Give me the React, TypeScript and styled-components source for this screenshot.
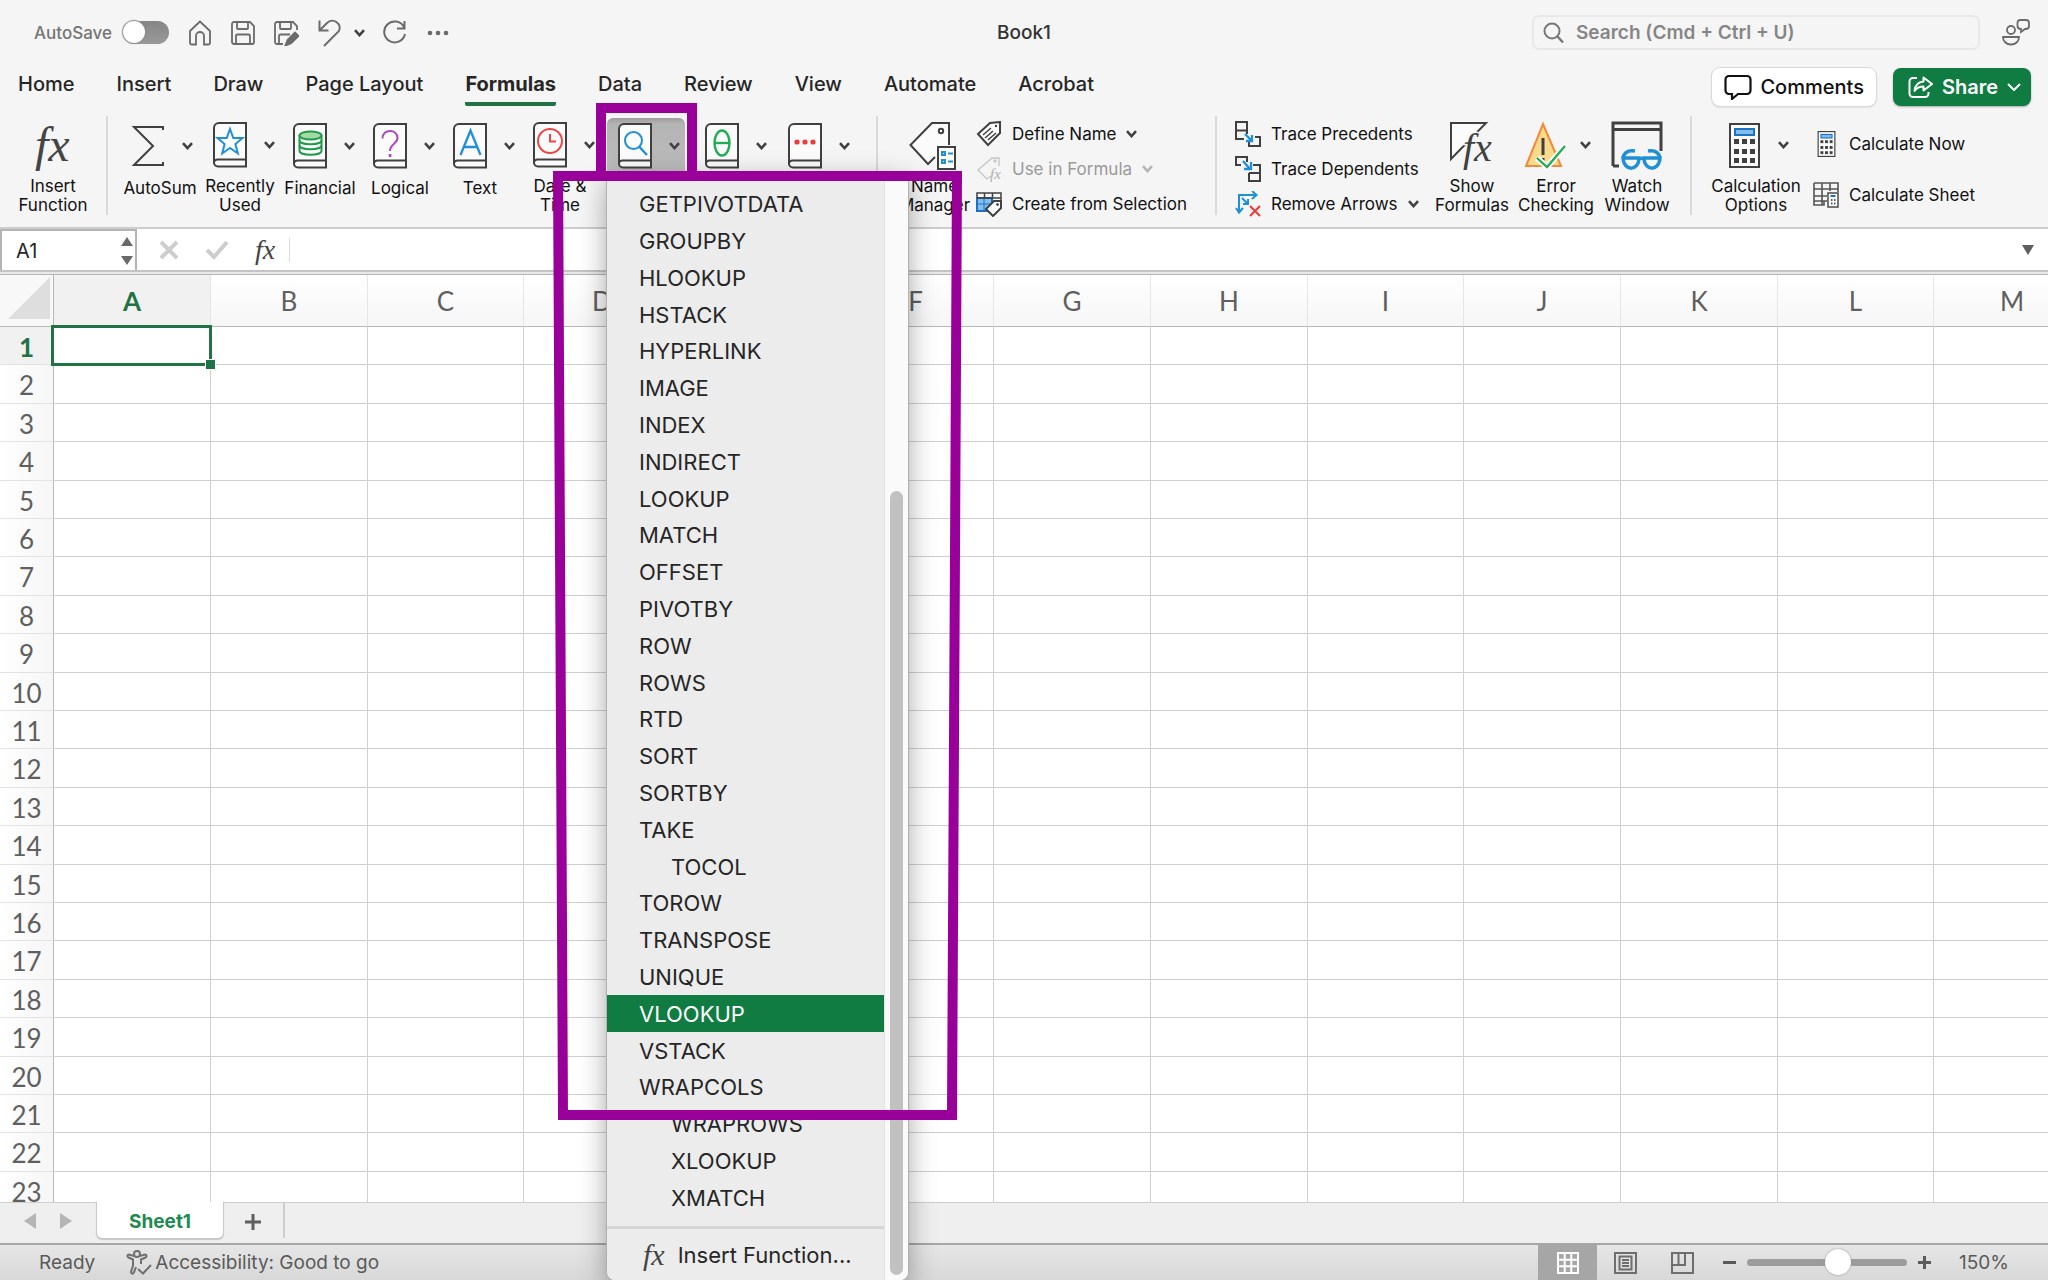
import React from 'react';
import styled, { createGlobalStyle, css } from 'styled-components';

const GlobalStyle = createGlobalStyle`
  *, *::before, *::after { box-sizing: border-box; }
  body { margin: 0; font-family: Inter, "Liberation Sans", sans-serif; color: #262626; background: #f5f5f5; }
  button, input { font: inherit; color: inherit; }
  button { border: 0; padding: 0; margin: 0; background: none; white-space: nowrap; }
`;

const GREEN = '#107c41';
const INK = '#404040';
const BLUE = '#1f8fd6';

/* ---------- shell ---------- */

const Window = styled.div`
  display: flex;
  flex-direction: column;
  height: 100vh;
  min-height: 640px;
  overflow: hidden;
  background: #f5f5f5;
`;

const TitleBar = styled.header`
  display: grid;
  grid-template-columns: 1fr auto 1fr;
  align-items: center;
  height: 65px;
  padding: 0 18px;
  flex: none;
`;

const QuickAccess = styled.div`
  display: flex;
  align-items: center;
  padding-left: 16px;
  color: #6b6b6b;
`;

const AutoSave = styled.label`
  display: flex;
  align-items: center;
  gap: 11px;
  margin-right: 19px;
  font-size: 17px;
  font-weight: 500;
  color: #757575;
`;

const Toggle = styled.input`
  appearance: none;
  width: 46px;
  height: 23px;
  margin: 0;
  border-radius: 12px;
  background: linear-gradient(#858585, #9a9a9a);
  &::before {
    content: '';
    display: block;
    width: 22px;
    height: 22px;
    border-radius: 50%;
    background: #fff;
    box-shadow: 0 0 1px 1px #8a8a8a;
  }
`;

const QuickButton = styled.button<{ $gap?: number }>`
  display: flex;
  margin-right: ${(p) => p.$gap ?? 19}px;
`;

const DocTitle = styled.h1`
  margin: 0;
  font-size: 19px;
  font-weight: 500;
  color: #333;
`;

const TitleRight = styled.div`
  display: flex;
  align-items: center;
  justify-content: flex-end;
  gap: 22px;
`;

const SearchBox = styled.label`
  display: flex;
  align-items: center;
  gap: 12px;
  width: 448px;
  height: 35px;
  padding-left: 9px;
  border: 2px solid #e8e8e8;
  border-radius: 7px;
  color: #7a7a7a;
`;

const SearchInput = styled.input`
  flex: 1;
  border: 0;
  outline: 0;
  padding: 0;
  background: transparent;
  font-size: 19px;
  font-weight: 600;
  &::placeholder { color: #868686; opacity: 1; }
`;

const TabBar = styled.nav`
  display: flex;
  justify-content: space-between;
  align-items: flex-end;
  height: 41px;
  padding: 0 17px 0 18px;
  flex: none;
`;

const Tabs = styled.div`
  display: flex;
  gap: 42px;
  height: 41px;
`;

const Tab = styled.button<{ $active?: boolean }>`
  height: 41px;
  font-size: 20px;
  font-weight: ${(p) => (p.$active ? 700 : 500)};
  border-bottom: 4px solid ${(p) => (p.$active ? '#217346' : 'transparent')};
  border-radius: 2px;
`;

const Actions = styled.div`
  display: flex;
  gap: 17px;
`;

const ActionButton = styled.button<{ $primary?: boolean }>`
  display: flex;
  align-items: center;
  gap: 8px;
  height: 38px;
  padding: 0 12px;
  border-radius: 8px;
  font-size: 20px;
  font-weight: 500;
  color: #111;
  background: #fff;
  box-shadow: 0 0 0 1px #d8d8d8, 0 1px 2px #bbb;
  ${(p) => p.$primary && css`
    gap: 9px;
    padding: 0 10px 0 15px;
    color: #fff;
    font-weight: 600;
    background: ${GREEN};
    box-shadow: 0 1px 2px #aaa;
  `}
`;

/* ---------- ribbon ---------- */

const RibbonBar = styled.section`
  display: flex;
  flex: none;
  position: relative;
  z-index: 2;
  padding: 10px 0 12px;
  border-bottom: 2px solid #cdcdcd;
  color: #111;
`;

const Group = styled.div<{ $pad?: number; $end?: number }>`
  display: flex;
  flex: none;
  height: 99px;
  padding-left: ${(p) => p.$pad ?? 0}px;
  padding-right: ${(p) => p.$end ?? 0}px;
  & + & { border-left: 2px solid #d9d9d9; }
`;

const BigButton = styled.button<{ $w: number }>`
  display: flex;
  flex-direction: column;
  width: ${(p) => p.$w}px;
  height: 97px;
  margin-top: 2px;
`;

const IconRow = styled.span<{ $inset: number; $gap?: number; $held?: boolean }>`
  display: flex;
  align-items: center;
  align-self: stretch;
  gap: ${(p) => p.$gap ?? 17}px;
  height: 56px;
  padding-left: ${(p) => p.$inset}px;
  ${(p) => p.$held && css`
    border-radius: 6px 6px 0 0;
    background: linear-gradient(#9d9d9d, #b4b4b4 6px, #bcbcbc);
  `}
`;

const BigLabel = styled.span`
  align-self: stretch;
  margin: 5px -20px 0;
  font-size: 17px;
  line-height: 19px;
  text-align: center;
  white-space: pre;
`;

const SmallStack = styled.div<{ $w: number; $before?: number; $top?: number; $gap?: number }>`
  display: flex;
  flex-direction: column;
  width: ${(p) => p.$w}px;
  margin-left: ${(p) => p.$before ?? 0}px;
  padding-top: ${(p) => p.$top ?? 8}px;
  gap: ${(p) => p.$gap ?? 15}px;
`;

const SmallButton = styled.button`
  display: flex;
  align-items: center;
  gap: 10px;
  height: 20px;
  font-size: 17px;
  line-height: 20px;
  &:disabled { color: #9a9a9a; }
`;

const IconBox = styled.span`
  display: flex;
  justify-content: center;
  width: 26px;
`;

const Anchor = styled.div`
  position: relative;
  margin: 0 7px;
`;

/* ---------- function menu ---------- */

const Menu = styled.div`
  position: absolute;
  top: 57px;
  left: 0;
  display: flex;
  width: 301px;
  border-radius: 0 0 8px 8px;
  overflow: hidden;
  background: #ececec;
  font-size: 22px;
  color: #262626;
`;

const MenuShadow = styled.div`
  position: absolute;
  top: 57px;
  left: 0;
  width: 301px;
  height: 1107px;
  border-radius: 8px;
  box-shadow: 0 0 1px 1px #b0b0b0, 0 8px 28px rgba(0, 0, 0, 0.36);
`;

const MenuBody = styled.div`
  flex: 1;
  padding-top: 12px;
`;

const MenuList = styled.ul`
  margin: 0;
  padding: 0 0 10px;
  list-style: none;
  border-bottom: 3px solid #d6d6d6;
`;

const MenuRow = styled.li`
  display: flex;
  height: 37px;
  &:nth-child(5n) { height: 36px; }
`;

const MenuItem = styled.button<{ $indent?: boolean; $active?: boolean }>`
  flex: 1;
  text-align: left;
  padding-left: ${(p) => (p.$indent ? 64 : 32)}px;
  ${(p) => p.$active && css`color: #fff; background: ${GREEN};`}
`;

const MenuFooter = styled.button`
  display: flex;
  align-items: center;
  gap: 13px;
  height: 51px;
  padding-left: 36px;
`;

const ScrollTrack = styled.div`
  width: 24px;
  padding: 318px 5px 5px;
  background: #fafafa;
  border-left: 1px solid #e3e3e3;
`;

const ScrollThumb = styled.div`
  height: 100%;
  border-radius: 7px;
  background: #c1c1c1;
`;

const Callout = styled.svg`
  position: absolute;
  left: -60px;
  top: -20px;
  pointer-events: none;
`;

/* ---------- formula bar ---------- */

const FormulaBar = styled.div`
  display: flex;
  align-items: center;
  flex: none;
  height: 46px;
  padding-bottom: 4px;
  background: #fff;
  border-bottom: 1px solid #b5b5b5;
  box-shadow: inset 0 -2px #e8e8e8, inset 0 -4px #c4c4c4;
`;

const NameBox = styled.div`
  display: flex;
  align-items: center;
  width: 137px;
  height: 41px;
  margin-right: 8px;
  padding: 0 2px 0 14px;
  border: 2px solid #b4b4b4;
  border-bottom: 0;
`;

const CellRef = styled.input`
  flex: 1;
  min-width: 0;
  border: 0;
  outline: 0;
  padding: 0;
  font-size: 20px;
`;

const FormulaButton = styled.button<{ $w?: number }>`
  display: flex;
  justify-content: center;
  width: ${(p) => p.$w ?? 48}px;
`;

const FormulaInput = styled.input`
  flex: 1;
  height: 24px;
  border: 0;
  border-left: 1px solid #dcdcdc;
  outline: 0;
  padding: 0 12px;
`;

const Fx = styled.span<{ $size: number }>`
  font-family: "Liberation Serif", serif;
  font-style: italic;
  font-size: ${(p) => p.$size}px;
  line-height: 1;
  color: #444;
`;

/* ---------- grid ---------- */

const SheetArea = styled.main`
  flex: 1;
  min-height: 0;
  overflow: hidden;
  background: #fff;
`;

const Grid = styled.table`
  table-layout: fixed;
  width: 2091px;
  border-collapse: separate;
  border-spacing: 0;
  font-family: Lato, "Liberation Sans", sans-serif;
  font-size: 26px;
  color: #5f5f5f;
`;

const HeadCol = styled.col`
  width: 54px;
`;

const CellCol = styled.col`
  width: 157px;
  &:nth-child(3n + 1) { width: 156px; }
`;

const ColHead = styled.th<{ $active?: boolean }>`
  height: 52px;
  padding: 0;
  font-weight: ${(p) => (p.$active ? 700 : 400)};
  color: ${(p) => (p.$active ? '#217346' : 'inherit')};
  background: ${(p) => (p.$active ? '#f1f1f1' : 'linear-gradient(#fff, #f6f6f6)')};
  border-right: 1px solid #e6e6e6;
  border-bottom: 1px solid #b9b9b9;
`;

const Corner = styled.td`
  padding: 0 0 0 8px;
  vertical-align: middle;
  background: #f8f8f8;
  border-right: 1px solid #b9b9b9;
  border-bottom: 1px solid #b9b9b9;
`;

const Row = styled.tr`
  height: 38px;
  &:nth-child(5n + 2), &:nth-child(5n + 4) { height: 39px; }
`;

const RowHead = styled.th<{ $active?: boolean }>`
  padding: 2px 0 0;
  line-height: 30px;
  font-weight: ${(p) => (p.$active ? 700 : 400)};
  color: ${(p) => (p.$active ? '#217346' : 'inherit')};
  background: ${(p) => (p.$active ? '#f1f1f1' : 'linear-gradient(90deg, #fff, #f6f6f6)')};
  border-right: 1px solid #b9b9b9;
  border-bottom: 1px solid #e3e3e3;
`;

const Cell = styled.td<{ $active?: boolean }>`
  padding: 0;
  border-right: 1px solid #cfcfcf;
  border-bottom: 1px solid #cfcfcf;
  ${(p) => p.$active && css`
    position: relative;
    &::before {
      content: '';
      position: absolute;
      inset: -2px -2px -2px -3px;
      border: 3px solid #217346;
    }
    &::after {
      content: '';
      position: absolute;
      right: -5px;
      bottom: -5px;
      width: 9px;
      height: 9px;
      background: #217346;
      box-shadow: 0 0 0 1px #fff;
    }
  `}
`;

/* ---------- bottom bars ---------- */

const SheetBar = styled.div`
  display: flex;
  flex: none;
  height: 41px;
  padding-left: 24px;
  background: #efefef;
  box-shadow: inset 0 1px #cfcfcf;
`;

const SheetNav = styled.div`
  display: flex;
  align-items: center;
  gap: 24px;
  width: 73px;
  height: 42px;
`;

const SheetTab = styled.button`
  width: 126px;
  height: 36px;
  padding-top: 3px;
  border-radius: 0 0 5px 5px;
  background: #fff;
  box-shadow: 0 1px 1px 1px #c6c6c6;
  clip-path: inset(0 -3px -4px -3px);
  font-size: 19px;
  font-weight: 700;
  color: #1f8a50;
`;

const AddSheet = styled.button`
  display: flex;
  align-items: center;
  justify-content: center;
  width: 62px;
  height: 36px;
  padding-top: 3px;
  border-right: 2px solid #cdcdcd;
`;

const StatusBar = styled.footer`
  display: flex;
  flex: none;
  align-items: center;
  justify-content: space-between;
  height: 37px;
  padding-left: 39px;
  border-top: 2px solid #a6a6a6;
  background: linear-gradient(#e6e6e6, #d8d8d8);
  font-size: 19px;
  color: #5a5a5a;
`;

const StatusLeft = styled.div`
  display: flex;
  align-items: center;
  gap: 31px;
`;

const Accessibility = styled.button`
  display: flex;
  align-items: center;
  gap: 3px;
`;

const StatusRight = styled.div`
  display: flex;
  align-items: center;
  align-self: stretch;
`;

const ViewButton = styled.button<{ $active?: boolean }>`
  display: flex;
  align-items: center;
  justify-content: center;
  align-self: stretch;
  width: ${(p) => (p.$active ? 59 : 57)}px;
  color: ${(p) => (p.$active ? '#fff' : '#6e6e6e')};
  background: ${(p) => (p.$active ? '#a6a6a6' : 'transparent')};
`;

const ZoomControl = styled.div`
  display: flex;
  align-items: center;
  gap: 11px;
  margin-left: 12px;
`;

const ZoomRange = styled.input`
  appearance: none;
  width: 160px;
  height: 26px;
  margin: 0;
  background: transparent;
  &::-webkit-slider-runnable-track {
    height: 7px;
    border-radius: 4px;
    background: #9c9c9c;
  }
  &::-webkit-slider-thumb {
    appearance: none;
    width: 26px;
    height: 26px;
    margin-top: -10px;
    border-radius: 50%;
    background: #fff;
    box-shadow: 0 0 2px #888;
  }
`;

const ZoomValue = styled.span`
  width: 89px;
  margin-left: 28px;
`;

/* ---------- drawings ---------- */

type IconProps = { w: number; h: number; children: React.ReactNode; stroke?: string; sw?: number };

const Icon = ({ w, h, children, stroke = 'currentColor', sw = 2 }: IconProps) => (
  <svg width={w} height={h} viewBox={`0 0 ${w} ${h}`} fill="none" stroke={stroke} strokeWidth={sw} aria-hidden="true">
    {children}
  </svg>
);

const Chevron = ({ color = '#404040', thin = false }: { color?: string; thin?: boolean }) => (
  <Icon w={thin ? 14 : 11} h={8} stroke={color} sw={thin ? 2 : 2.5}>
    <path d={thin ? 'M1 1l6 6 6-6' : 'M1 1.2l4.5 5L10 1.2'} />
  </Icon>
);

const Book = ({ children }: { children: React.ReactNode }) => (
  <Icon w={34} h={46} stroke={INK}>
    <path d="M33 1H6a5 5 0 0 0-5 5v34.5A4 4 0 0 0 5 44.5H33z" fill="#fbfbfb" />
    <path d="M33 37.5H5a3.5 3.5 0 0 0-4 3.5" />
    {children}
  </Icon>
);

const glyphs = {
  star: <path d="M17 7l3.3 9h9.2l-7.1 6 2.4 9.500L17 26l-7.800 5.500 2.400-9.500-7.100-6h9.200z" stroke={BLUE} />,
  coins: (
    <g stroke="#1f9a48" fill="#fbfbfb">
      <path d="M6.5 12v16c0 5 22 5 22 0V12" />
      <path d="M6.5 17.500c0 5 22 5 22 0M6.5 22.500c0 5 22 5 22 0" fill="none" />
      <ellipse cx="17.5" cy="12.5" rx="11" ry="4" fill="#a3d9a5" />
    </g>
  ),
  question: (
    <g stroke="#b146c2">
      <path d="M9.5 15.500c0-10 15-10 15-.5 0 6-7.500 5.500-7.500 13" />
      <path d="M15.8 32.500h2.600" strokeWidth="3" />
    </g>
  ),
  letter: <path d="M7.500 32L17.500 7.500 27.500 32M11 24h13" stroke={BLUE} strokeWidth="2.3" />,
  clock: (
    <g stroke="#f04545">
      <circle cx="17" cy="19" r="12" />
      <path d="M17 12v7.500h6" />
    </g>
  ),
  lens: (
    <g stroke={BLUE}>
      <circle cx="15.5" cy="17.5" r="8.5" />
      <path d="M21.500 24l7.500 8" strokeWidth="2.3" />
    </g>
  ),
  theta: (
    <g stroke="#22ad55" strokeWidth="2.4">
      <ellipse cx="17" cy="20" rx="7.500" ry="12.500" />
      <path d="M9.500 20h15" />
    </g>
  ),
  dots: (
    <g fill="#ee3a35" stroke="none">
      <circle cx="9" cy="19" r="2.6" />
      <circle cx="17" cy="19" r="2.6" />
      <circle cx="25" cy="19" r="2.6" />
    </g>
  ),
};

type BookButtonProps = { glyph: keyof typeof glyphs; label?: string; name?: string; w?: number };

const BookButton = ({ glyph, label, name, w = 80 }: BookButtonProps) => (
  <BigButton $w={w} aria-label={name}>
    <IconRow $inset={13}>
      <Book>{glyphs[glyph]}</Book>
      <Chevron />
    </IconRow>
    {label && <BigLabel>{label}</BigLabel>}
  </BigButton>
);

const Calculator = ({ w, h }: { w: number; h: number }) => (
  <svg width={w} height={h} viewBox="0 0 31 45" fill="none" stroke={INK} strokeWidth="2" aria-hidden="true">
    <rect x="1" y="1" width="29" height="43" fill="#fbfbfb" />
    <rect x="6" y="6" width="19" height="6" fill="#83bdec" stroke="#1c72c0" />
    {[16, 26, 35].map((y) => [5, 13, 21].map((x) => <rect key={`${x}-${y}`} x={x} y={y} width="5" height="5" fill={INK} stroke="none" />))}
  </svg>
);

const FUNCTIONS = [
  'GETPIVOTDATA', 'GROUPBY', 'HLOOKUP', 'HSTACK', 'HYPERLINK', 'IMAGE', 'INDEX', 'INDIRECT', 'LOOKUP', 'MATCH',
  'OFFSET', 'PIVOTBY', 'ROW', 'ROWS', 'RTD', 'SORT', 'SORTBY', 'TAKE', 'TOCOL', 'TOROW', 'TRANSPOSE', 'UNIQUE',
  'VLOOKUP', 'VSTACK', 'WRAPCOLS', 'WRAPROWS', 'XLOOKUP', 'XMATCH',
];
const INDENTED = new Set(['TOCOL', 'WRAPROWS', 'XLOOKUP', 'XMATCH']);
const TABS = ['Home', 'Insert', 'Draw', 'Page Layout', 'Formulas', 'Data', 'Review', 'View', 'Automate', 'Acrobat'];
const COLUMNS = 'ABCDEFGHIJKLM'.split('');
const ROWS = Array.from({ length: 23 }, (_, i) => i + 1);

const LookupMenu = () => (
  <Anchor>
    <MenuShadow />
    <BigButton $w={78} aria-label="Lookup and reference" aria-expanded="true">
      <IconRow $inset={11} $held>
        <Book>{glyphs.lens}</Book>
        <Chevron />
      </IconRow>
    </BigButton>
    <Menu>
      <MenuBody>
        <MenuList>
          {FUNCTIONS.map((f) => (
            <MenuRow key={f}>
              <MenuItem $indent={INDENTED.has(f)} $active={f === 'VLOOKUP'}>{f}</MenuItem>
            </MenuRow>
          ))}
        </MenuList>
        <MenuFooter>
          <Fx $size={30}>fx</Fx>
          <span>Insert Function...</span>
        </MenuFooter>
      </MenuBody>
      <ScrollTrack><ScrollThumb /></ScrollTrack>
    </Menu>
    <Callout width="420" height="1040" viewBox="0 0 420 1040" fill="none" stroke="#990099" strokeWidth="10" aria-hidden="true">
      <path d="M54 80V12H145V80" />
      <path d="M11 80H410L405 1019H16L11 75" />
    </Callout>
  </Anchor>
);

const Ribbon = () => (
  <RibbonBar>
    <Group>
      <BigButton $w={106}>
        <IconRow $inset={35}><Fx $size={48}>fx</Fx></IconRow>
        <BigLabel>{'Insert\nFunction'}</BigLabel>
      </BigButton>
    </Group>
    <Group $pad={12} $end={19}>
      <BigButton $w={80}>
        <IconRow $inset={11}>
          <Icon w={34} h={42} stroke={INK} sw={2}>
            <path d="M32 5V2H3l19 19L3 40h29v-3" />
          </Icon>
          <Chevron />
        </IconRow>
        <BigLabel>AutoSum</BigLabel>
      </BigButton>
      <BookButton glyph="star" label={'Recently\nUsed'} />
      <BookButton glyph="coins" label="Financial" />
      <BookButton glyph="question" label="Logical" />
      <BookButton glyph="letter" label="Text" />
      <BookButton glyph="clock" label={'Date &\nTime'} />
      <LookupMenu />
      <BookButton glyph="theta" name="Math and trigonometry" w={83} />
      <BookButton glyph="dots" name="More functions" w={82} />
    </Group>
    <Group $pad={15}>
      <BigButton $w={83}>
        <IconRow $inset={16}>
          <Icon w={48} h={49} stroke={INK}>
            <path d="M40 24V2H23L1.500 24 19 43l7-7" fill="#fbfbfb" />
            <circle cx="32" cy="10" r="2.2" />
            <rect x="29" y="26" width="17" height="22" fill="#fff" />
            <path d="M33 31h3v3h-3zM33 39h3v3h-3zM39 32.500h5M39 40.500h5" stroke={BLUE} />
          </Icon>
        </IconRow>
        <BigLabel>{'Name\nManager'}</BigLabel>
      </BigButton>
      <SmallStack $w={239}>
        <SmallButton>
          <IconBox>
            <Icon w={26} h={26} stroke={INK} sw={2}>
              <path d="M2 13L14 2l10-1v11L12 24z" fill="#fff" />
              <path d="M7 14l8-7M9 17l8-7M12 19l8-7" strokeWidth="1.5" />
              <circle cx="20" cy="5" r="1.2" fill={INK} stroke="none" />
            </Icon>
          </IconBox>
          Define Name <Chevron />
        </SmallButton>
        <SmallButton disabled>
          <IconBox>
            <Icon w={26} h={26} stroke="#c4c4c4" sw={1.3}>
              <path d="M23 10V2h-7L2 14l9 9 4-3" />
              <circle cx="19" cy="5" r="1" />
              <text x="14" y="23" fontFamily="Liberation Serif" fontStyle="italic" fontSize="15" fill="#b0b0b0" stroke="none">fx</text>
            </Icon>
          </IconBox>
          Use in Formula <Chevron color="#b5b5b5" />
        </SmallButton>
        <SmallButton>
          <IconBox>
            <Icon w={26} h={26} stroke={INK} sw={1}>
              <path d="M1 7h15v13H1z" fill="#83bdec" stroke="#1c72c0" strokeWidth="2" />
              <path d="M1 13h14M8 7v13" stroke="#1c72c0" />
              <path d="M1 7V2h24v10M8.500 2v5M16.500 2v5M1 7h24" strokeWidth="1.5" />
              <path d="M10 18l8-8h7v7l-8 8z" fill="#fff" strokeWidth="2" />
              <circle cx="21.5" cy="13.5" r="1" fill={INK} />
            </Icon>
          </IconBox>
          Create from Selection
        </SmallButton>
      </SmallStack>
    </Group>
    <Group $pad={18} $end={18}>
      <SmallStack $w={199}>
        <SmallButton>
          <IconBox>
            <Icon w={26} h={26} stroke={INK}>
              <path d="M1 9.500h11M12 13V1H1v17h8M20 16h5v9H14v-4" />
              <path d="M10 13l7 7M17 14v6h-6" stroke={BLUE} strokeWidth="2.3" />
            </Icon>
          </IconBox>
          Trace Precedents
        </SmallButton>
        <SmallButton>
          <IconBox>
            <Icon w={26} h={26} stroke={INK}>
              <path d="M6 9H1V1h11v5M18 9h7v16H14v-8M14 17h11" />
              <path d="M8 5l7 8M16 6v7h-7" stroke={BLUE} strokeWidth="2.3" />
            </Icon>
          </IconBox>
          Trace Dependents
        </SmallButton>
        <SmallButton>
          <IconBox>
            <Icon w={26} h={26} stroke={BLUE}>
              <path d="M4 21V4h17M17 0l4.500 4L17 8M1 17l3 4.500L8 17M7 7l6 6M13 8v5H8" />
              <path d="M15 15l10 10M25 15L15 25" stroke="#ee3a35" />
            </Icon>
          </IconBox>
          Remove Arrows <Chevron />
        </SmallButton>
      </SmallStack>
      <BigButton $w={76}>
        <IconRow $inset={15}>
          <Icon w={46} h={49} stroke={INK}>
            <path d="M2 38V2h35L2 38z" fill="#fbfbfb" />
            <text x="14" y="40" fontFamily="Liberation Serif" fontStyle="italic" fontSize="40" fill={INK} stroke="#f5f5f5" strokeWidth="3" paintOrder="stroke">fx</text>
          </Icon>
        </IconRow>
        <BigLabel>{'Show\nFormulas'}</BigLabel>
      </BigButton>
      <BigButton $w={92}>
        <IconRow $inset={14} $gap={7}>
          <Icon w={49} h={49}>
            <path d="M19 3l18 42H2z" fill="#f9d98c" stroke="#f08a3c" />
            <path d="M19 17v17M19 37v4" stroke={INK} strokeWidth="3" />
            <path d="M13 37l10 9 18-21" stroke="#fff" strokeWidth="6" />
            <path d="M13 37l10 9 18-21" stroke="#22ad55" strokeWidth="2.3" />
          </Icon>
          <Chevron />
        </IconRow>
        <BigLabel>{'Error\nChecking'}</BigLabel>
      </BigButton>
      <BigButton $w={70}>
        <IconRow $inset={9}>
          <Icon w={52} h={49} stroke={INK} sw={3}>
            <path d="M2 45V2h48v28M2 8.500h48M2 45h6" fill="none" />
            <g stroke={BLUE} strokeWidth="3.5">
              <path d="M12 37h16c0 13-15 14-16 0zM33 37h16c-1 14-16 13-16 0zM27 39c2-2 5-2 7 0M12 37c1-5 5-8 12-7M49 37c-1-5-5-8-12-7" />
            </g>
          </Icon>
        </IconRow>
        <BigLabel>{'Watch\nWindow'}</BigLabel>
      </BigButton>
    </Group>
    <Group $pad={18}>
      <BigButton $w={92}>
        <IconRow $inset={19} $gap={18}>
          <Calculator w={31} h={45} />
          <Chevron />
        </IconRow>
        <BigLabel>{'Calculation\nOptions'}</BigLabel>
      </BigButton>
      <SmallStack $w={170} $before={11} $top={18} $gap={31}>
        <SmallButton>
          <IconBox><Calculator w={19} h={26} /></IconBox>
          Calculate Now
        </SmallButton>
        <SmallButton>
          <IconBox>
            <Icon w={26} h={26} stroke="#555" sw={1}>
              <path d="M1 1h24v9M1 1v22h10v-4M1 7h24M1 14h13M1 19h13M9 1v22M17 1v8" strokeWidth="1.6" />
              <rect x="15" y="11" width="10" height="14" fill="#fff" strokeWidth="1.6" />
              <path d="M17.500 14h5" stroke="#1c72c0" strokeWidth="2" />
              <path d="M18 18h1.500M21 18h1.500M18 21.500h1.500M21 21.500h1.500" strokeWidth="2" />
            </Icon>
          </IconBox>
          Calculate Sheet
        </SmallButton>
      </SmallStack>
    </Group>
  </RibbonBar>
);

export default function App() {
  return (
    <Window>
      <GlobalStyle />
      <TitleBar>
        <QuickAccess>
          <AutoSave>AutoSave<Toggle type="checkbox" role="switch" /></AutoSave>
          <QuickButton aria-label="Home">
            <Icon w={24} h={26}><path d="M12 1.500L2 11v12a1.500 1.500 0 0 0 1.500 1.500H8V16a4 4 0 0 1 8 0v8.500h4.500A1.500 1.500 0 0 0 22 23V11z" strokeWidth="1.8" /></Icon>
          </QuickButton>
          <QuickButton aria-label="Save">
            <Icon w={24} h={24} sw={1.8}><path d="M3 1h16l4 4v16a2 2 0 0 1-2 2H3a2 2 0 0 1-2-2V3a2 2 0 0 1 2-2zM6 1v6a1 1 0 0 0 1 1h9a1 1 0 0 0 1-1V1M5 23v-8a1.500 1.500 0 0 1 1.500-1.500h11A1.500 1.500 0 0 1 19 15v8" /></Icon>
          </QuickButton>
          <QuickButton aria-label="Save as">
            <Icon w={25} h={26} sw={1.8}>
              <path d="M9 24H3a2 2 0 0 1-2-2V4a2 2 0 0 1 2-2h16l4 4v4M6 2v6a1 1 0 0 0 1 1h9a1 1 0 0 0 1-1V2M5 24v-8a1.500 1.500 0 0 1 1.500-1.500H16" />
              <path d="M12 25l2-5 7-7 3 3-7 7z" fill="currentColor" strokeWidth="2.5" />
            </Icon>
          </QuickButton>
          <QuickButton aria-label="Undo" $gap={13}>
            <Icon w={23} h={28} sw={2}><path d="M1.500 1.500v10h9M1.500 11.500L9 4c6-6 16 1 11.500 8.500L6 27" /></Icon>
          </QuickButton>
          <QuickButton aria-label="Undo history" $gap={17}><Chevron /></QuickButton>
          <QuickButton aria-label="Redo" $gap={20}>
            <Icon w={25} h={26} sw={2}><path d="M22 7A10.500 10.500 0 1 0 23 14M22.500 1v7.500H15" /></Icon>
          </QuickButton>
          <QuickButton aria-label="More commands" $gap={0}>
            <Icon w={22} h={6}><g fill="currentColor" stroke="none"><circle cx="3" cy="3" r="2.3" /><circle cx="11" cy="3" r="2.3" /><circle cx="19" cy="3" r="2.3" /></g></Icon>
          </QuickButton>
        </QuickAccess>
        <DocTitle>Book1</DocTitle>
        <TitleRight>
          <SearchBox>
            <Icon w={21} h={23} sw={2}><circle cx="9" cy="10" r="7.5" /><path d="M14.500 15.500L20 21.500" strokeWidth="2.5" /></Icon>
            <SearchInput aria-label="Search" placeholder="Search (Cmd + Ctrl + U)" />
          </SearchBox>
          <QuickButton aria-label="Account" $gap={0}>
            <Icon w={28} h={27} stroke="#6b6b6b" sw={1.8}>
              <circle cx="9" cy="11" r="4" />
              <path d="M1 18h16c0 4-3 7.500-8 7.500S1 22 1 18zM15.500 4a3 3 0 0 1 3-3H24a3 3 0 0 1 3 3v3a3 3 0 0 1-3 3h-1l-4 3v-3c-2 0-3.500-1-3.500-3z" />
            </Icon>
          </QuickButton>
        </TitleRight>
      </TitleBar>

      <TabBar>
        <Tabs>{TABS.map((t) => <Tab key={t} $active={t === 'Formulas'}>{t}</Tab>)}</Tabs>
        <Actions>
          <ActionButton>
            <Icon w={28} h={26} sw={2.2}><path d="M5 2h18a3.500 3.500 0 0 1 3.500 3.500v11A3.500 3.500 0 0 1 23 20h-9l-6 5v-5H5a3.500 3.500 0 0 1-3.500-3.500v-11A3.500 3.500 0 0 1 5 2z" /></Icon>
            Comments
          </ActionButton>
          <ActionButton $primary>
            <Icon w={25} h={23}>
              <path d="M9 2H5a3.500 3.500 0 0 0-3.500 3.500v12A3.500 3.500 0 0 0 5 21h12a3.500 3.500 0 0 0 3.500-3.500V16" />
              <path d="M15.500 1.500L24 8l-8.500 6.500v-4C11 10.500 8.500 12 6.500 15c.5-5 3-9 9-9.500z" strokeLinejoin="round" />
            </Icon>
            Share
            <Chevron color="#fff" thin />
          </ActionButton>
        </Actions>
      </TabBar>

      <Ribbon />

      <FormulaBar>
        <NameBox>
          <CellRef aria-label="Name box" defaultValue="A1" />
          <Icon w={12} h={28}><path d="M6 0l6 9H0zM6 28l6-9H0z" fill="#6a6a6a" stroke="none" /></Icon>
        </NameBox>
        <FormulaButton aria-label="Cancel">
          <Icon w={20} h={20} stroke="#cdcdcd" sw={4}><path d="M2 2l16 16M18 2L2 18" /></Icon>
        </FormulaButton>
        <FormulaButton aria-label="Enter">
          <Icon w={24} h={20} stroke="#cdcdcd" sw={4}><path d="M2 10l7 7L22 2" /></Icon>
        </FormulaButton>
        <FormulaButton aria-label="Insert function"><Fx $size={28}>fx</Fx></FormulaButton>
        <FormulaInput aria-label="Formula" />
        <FormulaButton aria-label="Expand formula bar" $w={40}>
          <Icon w={12} h={10}><path d="M0 0h12L6 10z" fill="#5f5f5f" stroke="none" /></Icon>
        </FormulaButton>
      </FormulaBar>

      <SheetArea>
        <Grid>
          <colgroup>
            <HeadCol />
            {COLUMNS.map((c) => <CellCol key={c} />)}
          </colgroup>
          <thead>
            <tr>
              <Corner><Icon w={42} h={42}><path d="M42 0v42H0z" fill="#dedede" stroke="none" /></Icon></Corner>
              {COLUMNS.map((c) => <ColHead key={c} scope="col" $active={c === 'A'}>{c}</ColHead>)}
            </tr>
          </thead>
          <tbody>
            {ROWS.map((r) => (
              <Row key={r}>
                <RowHead scope="row" $active={r === 1}>{r}</RowHead>
                {COLUMNS.map((c) => <Cell key={c} $active={r === 1 && c === 'A'} />)}
              </Row>
            ))}
          </tbody>
        </Grid>
      </SheetArea>

      <SheetBar>
        <SheetNav>
          <button aria-label="Previous sheet"><Icon w={12} h={16}><path d="M12 0v16L0 8z" fill="#b5b5b5" stroke="none" /></Icon></button>
          <button aria-label="Next sheet"><Icon w={12} h={16}><path d="M0 0v16l12-8z" fill="#b5b5b5" stroke="none" /></Icon></button>
        </SheetNav>
        <SheetTab>Sheet1</SheetTab>
        <AddSheet aria-label="Add sheet"><Icon w={16} h={16} stroke="#5f5f5f" sw={3}><path d="M8 0v16M0 8h16" /></Icon></AddSheet>
      </SheetBar>

      <StatusBar>
        <StatusLeft>
          <span>Ready</span>
          <Accessibility>
            <Icon w={26} h={25} stroke="#707070" sw={2}>
              <circle cx="11" cy="4" r="3" />
              <path d="M8 6L3 4.500C1 4.500 1 7 2.500 7.500L7 9.500v6L5 22c0 2 2 2 2.800.8L10 17M14 6l5-1.500c2 0 2 2.500.5 3L15 9.500V14M12 19l5 4.500 8-8.500" />
            </Icon>
            Accessibility: Good to go
          </Accessibility>
        </StatusLeft>
        <StatusRight>
          <ViewButton $active aria-label="Normal view">
            <Icon w={22} h={22}><path d="M1 1h20v20H1zM7.700 1v20M14.300 1v20M1 7.700h20M1 14.300h20" /></Icon>
          </ViewButton>
          <ViewButton aria-label="Page layout view">
            <Icon w={23} h={22}><path d="M1 1h21v20H1zM5.500 4.500h12v13h-12zM8 8h7M8 11h7M8 14h7" /></Icon>
          </ViewButton>
          <ViewButton aria-label="Page break preview">
            <Icon w={23} h={22}><path d="M1 1h21v20H1zM1 13h13V1M7.500 1v12" /></Icon>
          </ViewButton>
          <ZoomControl>
            <button aria-label="Zoom out"><Icon w={13} h={13} sw={3}><path d="M0 6.500h13" /></Icon></button>
            <ZoomRange type="range" min={0} max={100} defaultValue={58} aria-label="Zoom" />
            <button aria-label="Zoom in"><Icon w={13} h={13} sw={3}><path d="M6.500 0v13M0 6.500h13" /></Icon></button>
          </ZoomControl>
          <ZoomValue>150%</ZoomValue>
        </StatusRight>
      </StatusBar>
    </Window>
  );
}
